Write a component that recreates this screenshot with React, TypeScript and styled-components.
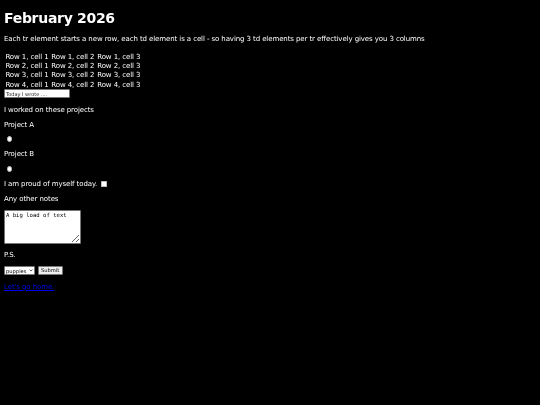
import React from 'react';
import styled, { createGlobalStyle } from 'styled-components';

const GlobalStyle = createGlobalStyle`
  html, body {
    background: #000;
  }
  body {
    margin: 3.5px;
    color: #fff;
    font-family: "DejaVu Sans", Verdana, sans-serif;
    font-size: 7px;
    letter-spacing: -0.1px;
    line-height: 8px;
  }
`;

const rows = [1, 2, 3, 4];
const cells = [1, 2, 3];

const App = () => {
  return (
    <Page>
      <GlobalStyle />
      <Title>February 2026</Title>
      <Intro>
        Each tr element starts a new row, each td element is a cell - so having 3 td elements per tr
        effectively gives you 3 columns
      </Intro>
      <Table>
        <tbody>
          {rows.map((r) => (
            <tr key={r}>
              {cells.map((c) => (
                <Cell key={c}>
                  Row {r}, cell {c}
                </Cell>
              ))}
            </tr>
          ))}
        </tbody>
      </Table>
      <TextInput type="text" placeholder="Today I wrote ...." />
      <Para $top={7.8}>I worked on these projects</Para>
      <Para $bottom={6.5}>Project A</Para>
      <Para $top={6.5}>
        <Radio type="radio" name="project" />
      </Para>
      <Para>Project B</Para>
      <Para>
        <Radio type="radio" name="project" />
      </Para>
      <Para>
        I am proud of myself today. <Check type="checkbox" />
      </Para>
      <Para>Any other notes</Para>
      <Notes defaultValue="A big load of text" />
      <Para>P.S.</Para>
      <FormRow>
        <SelectWrap>
          <Select defaultValue="puppies">
            <option value="puppies">puppies</option>
            <option value="kittens">kittens</option>
          </Select>
          <Chevron viewBox="0 0 8 5" aria-hidden="true">
            <path d="M1 1 L4 4 L7 1" fill="none" stroke="#000" strokeWidth="1.3" />
          </Chevron>
        </SelectWrap>
        <SubmitButton type="submit">Submit</SubmitButton>
      </FormRow>
      <Para $top={8}>
        <HomeLink href="#">Let's go home.</HomeLink>
      </Para>
    </Page>
  );
};

export default App;

// own layer, so text gets grey antialiasing like the reference
const Page = styled.main`
  display: flow-root;
  will-change: transform;
`;

const Title = styled.h1`
  font-size: 14px;
  letter-spacing: -0.3px;
  line-height: 16px;
  font-weight: bold;
  margin: 6px 0 9px;
`;

const Para = styled.p<{ $top?: number; $bottom?: number }>`
  margin: ${(p) => p.$top ?? 7}px 0 ${(p) => p.$bottom ?? 7}px;
`;

const Intro = styled(Para)`
  margin-bottom: 9px;
`;

const Table = styled.table`
  border-spacing: 0;
  font-size: 7px;
  line-height: 8.4px;
  color: #fff;
`;

const Cell = styled.td`
  padding: 0.5px 1.4px;
`;

const TextInput = styled.input`
  display: block;
  box-sizing: border-box;
  width: 66px;
  height: 9px;
  margin: -0.5px 0 0;
  padding: 0 1px;
  border: 1px solid #767676;
  border-radius: 1px;
  background: #fff;
  color: #000;
  font-family: "DejaVu Sans", sans-serif;
  font-size: 5px;
  letter-spacing: 0;
  outline: none;

  &::placeholder {
    color: #222;
  }
`;

const Radio = styled.input`
  appearance: none;
  display: inline-block;
  box-sizing: border-box;
  width: 5.6px;
  height: 5.6px;
  margin: 0 1.3px 0.6px 2.5px;
  border: 0.6px solid #bbb;
  border-radius: 50%;
  background: #fff;
  vertical-align: middle;
`;

const Check = styled.input`
  appearance: none;
  display: inline-block;
  box-sizing: border-box;
  width: 5.6px;
  height: 5.6px;
  margin: 0 1.3px 1px 1.8px;
  border: 0.6px solid #bbb;
  border-radius: 0.6px;
  background: #fff;
  vertical-align: middle;
`;

const Notes = styled.textarea`
  display: block;
  box-sizing: border-box;
  width: 77px;
  height: 34px;
  margin: -0.5px 0 0;
  padding: 1px;
  border: 1px solid #767676;
  border-radius: 1px;
  background: #fff;
  color: #000;
  font-family: "DejaVu Sans Mono", monospace;
  font-size: 5.6px;
  letter-spacing: 0;
  line-height: 6.6px;
  resize: both;
`;

const FormRow = styled.div`
  display: flex;
  align-items: center;
  gap: 2.5px;
  margin: 7.5px 0;
`;

const SelectWrap = styled.div`
  position: relative;
  display: inline-block;
`;

const Select = styled.select`
  appearance: none;
  display: block;
  box-sizing: border-box;
  width: 31px;
  height: 8.5px;
  padding: 0 0 0 1px;
  border: 0.8px solid #767676;
  border-radius: 1px;
  background: #fff;
  color: #000;
  font-family: "DejaVu Sans", sans-serif;
  font-size: 5.2px;
  letter-spacing: 0;
  line-height: 6px;
`;

const Chevron = styled.svg`
  position: absolute;
  right: 2.5px;
  top: 2.8px;
  width: 4px;
  height: 2.6px;
  pointer-events: none;
`;

const SubmitButton = styled.button`
  box-sizing: border-box;
  height: 8.5px;
  padding: 0 2.4px;
  border: 0.8px solid #767676;
  border-radius: 1px;
  background: #efefef;
  color: #000;
  font-family: "DejaVu Sans", sans-serif;
  font-size: 5.2px;
  letter-spacing: 0;
  line-height: 1;
`;

const HomeLink = styled.a`
  color: #0000ee;
  text-decoration: underline;
`;
